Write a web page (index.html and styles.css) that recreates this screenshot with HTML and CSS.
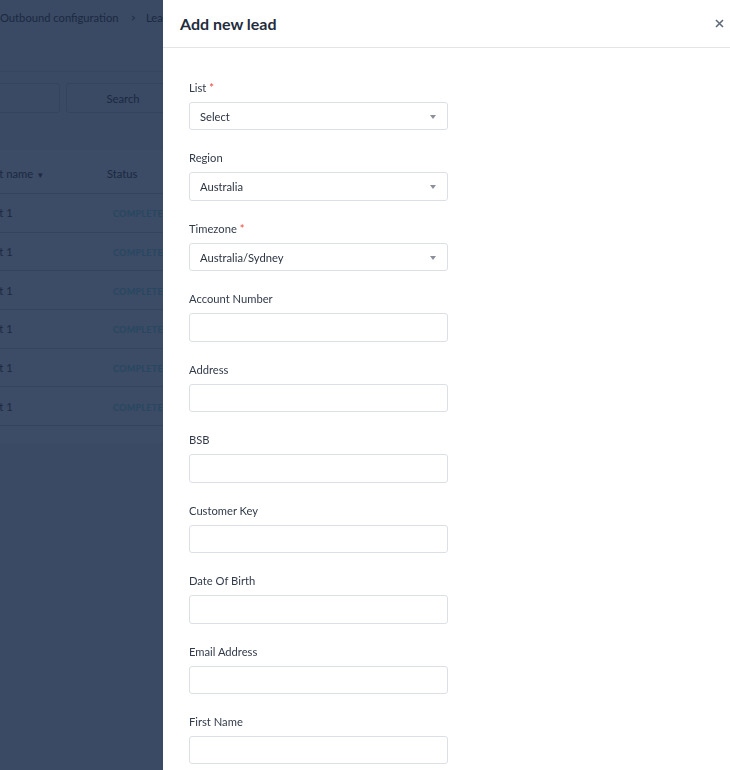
FILE: index.html
```html
<!doctype html>
<html>
<head>
 <title>Add new lead</title>
 <meta name=viewport content="width=device-width, initial-scale=1">
 <link rel="stylesheet" href="styles.css">
</head>
<body>
<div class=page>
 <div class=crumbs>
  <span>Outbound configuration</span>
  <span class=sep>&gt;</span>
  <span>Leads</span>
 </div>
 <div class=filters>
  <div class=search-input></div>
  <div class=search-btn>Search</div>
 </div>
 <div class=table>
  <div class="row head">
   <div class=c-name>List name <span class=caret>&#9662;</span></div>
   <div class=c-status>Status</div>
  </div>
  <div class=row><div class=c-name>List 1</div><div class=c-status><span class=tag>Complete</span></div></div>
  <div class=row><div class=c-name>List 1</div><div class=c-status><span class=tag>Complete</span></div></div>
  <div class=row><div class=c-name>List 1</div><div class=c-status><span class=tag>Complete</span></div></div>
  <div class=row><div class=c-name>List 1</div><div class=c-status><span class=tag>Complete</span></div></div>
  <div class=row><div class=c-name>List 1</div><div class=c-status><span class=tag>Complete</span></div></div>
  <div class=row><div class=c-name>List 1</div><div class=c-status><span class=tag>Complete</span></div></div>
 </div>
</div>

<div class=drawer>
 <div class=drawer-head>
  <span class=drawer-title>Add new lead</span>
  <span class=close>
   <svg width="9" height="9" viewBox="0 0 9 9"><path d="M1 1L8 8M8 1L1 8" stroke="#5f6b7c" stroke-width="1.6" fill="none"/></svg>
  </span>
 </div>
 <div class=drawer-body>
  <div class=field>
   <label>List<i class=req>*</i></label>
   <div class="box select">Select<span class=arrow></span></div>
  </div>
  <div class=field>
   <label>Region</label>
   <div class="box select">Australia<span class=arrow></span></div>
  </div>
  <div class=field>
   <label>Timezone<i class=req>*</i></label>
   <div class="box select">Australia/Sydney<span class=arrow></span></div>
  </div>
  <div class=field><label>Account Number</label><div class=box></div></div>
  <div class=field><label>Address</label><div class=box></div></div>
  <div class=field><label>BSB</label><div class=box></div></div>
  <div class=field><label>Customer Key</label><div class=box></div></div>
  <div class=field><label>Date Of Birth</label><div class=box></div></div>
  <div class=field><label>Email Address</label><div class=box></div></div>
  <div class=field><label>First Name</label><div class=box></div></div>
 </div>
</div>
</body>
</html>
```

FILE: styles.css
```css
  body, html {
    margin:0;
    height:100%;
    overflow:hidden;
    font-family: Lato, "Open Sans", sans-serif;
    font-size:11.2px;
    background-color:#3a4964;
  }
  .page {
    color:#1b2941;
  }
  .crumbs {
    height:72px;
    box-sizing:border-box;
    padding-top:11px;
    border-bottom:1px solid #37465f;
    display:flex;
  }
  .crumbs .sep {
    margin:0 9px 0 12px;
    transform:scaleX(.7);
  }
  .filters {
    display:flex;
    gap:6px;
    padding-top:11px;
    margin-left:-14px;
    height:60px;
    box-sizing:border-box;
  }
  .search-input {
    width:72px;
    height:28px;
    border:1px solid #35445e;
    border-radius:3px;
  }
  .search-btn {
    width:112px;
    height:28px;
    border:1px solid #35445e;
    border-radius:3px;
    display:flex;
    align-items:center;
    justify-content:center;
  }
  .table {
    background-color:#3c4b66;
    margin-top:18px;
    margin-left:-14px;
    height:293px;
  }
  .row {
    display:flex;
    align-items:center;
    height:38.7px;
    border-bottom:1px solid #35445e;
    box-sizing:border-box;
  }
  .row.head {
    height:44px;
    padding-top:4px;
  }
  .c-name {
    width:121px;
    flex-shrink:0;
  }
  .c-status {
    white-space:nowrap;
  }
  .caret {
    font-size:9px;
    margin-left:2px;
  }
  .tag {
    display:inline-block;
    margin-left:6px;
    font-size:9px;
    font-weight:bold;
    letter-spacing:.3px;
    text-transform:uppercase;
    color:#274860;
  }
  .drawer {
    position:fixed;
    top:0;
    right:0;
    bottom:0;
    left:163px;
    background-color:#ffffff;
    display:flex;
    flex-direction:column;
  }
  .drawer-head {
    height:48px;
    flex-shrink:0;
    box-sizing:border-box;
    border-bottom:1px solid #e4e4e4;
    display:flex;
    align-items:center;
    justify-content:space-between;
    padding:0 6px 0 17px;
  }
  .drawer-title {
    font-size:16px;
    font-weight:bold;
    color:#1f2d3d;
    margin-top:-1px;
  }
  .close {
    display:flex;
    margin-top:-1px;
  }
  .drawer-body {
    padding:32px 26px 0 26px;
  }
  .field {
    margin-bottom:20px;
  }
  .field label {
    display:block;
    line-height:16px;
    margin-bottom:6px;
    color:#323b4a;
  }
  .req {
    font-style:normal;
    color:#f04134;
    margin-left:3px;
  }
  .box {
    width:259px;
    height:28.44px;
    box-sizing:border-box;
    border:1px solid #dcdfe6;
    border-radius:3px;
    padding:0 10px;
    display:flex;
    align-items:center;
    color:#2b3442;
    position:relative;
  }
  .arrow {
    position:absolute;
    right:11px;
    top:12px;
    width:0;
    height:0;
    border-left:3.5px solid transparent;
    border-right:3.5px solid transparent;
    border-top:4px solid #8a8f99;
  }
```
